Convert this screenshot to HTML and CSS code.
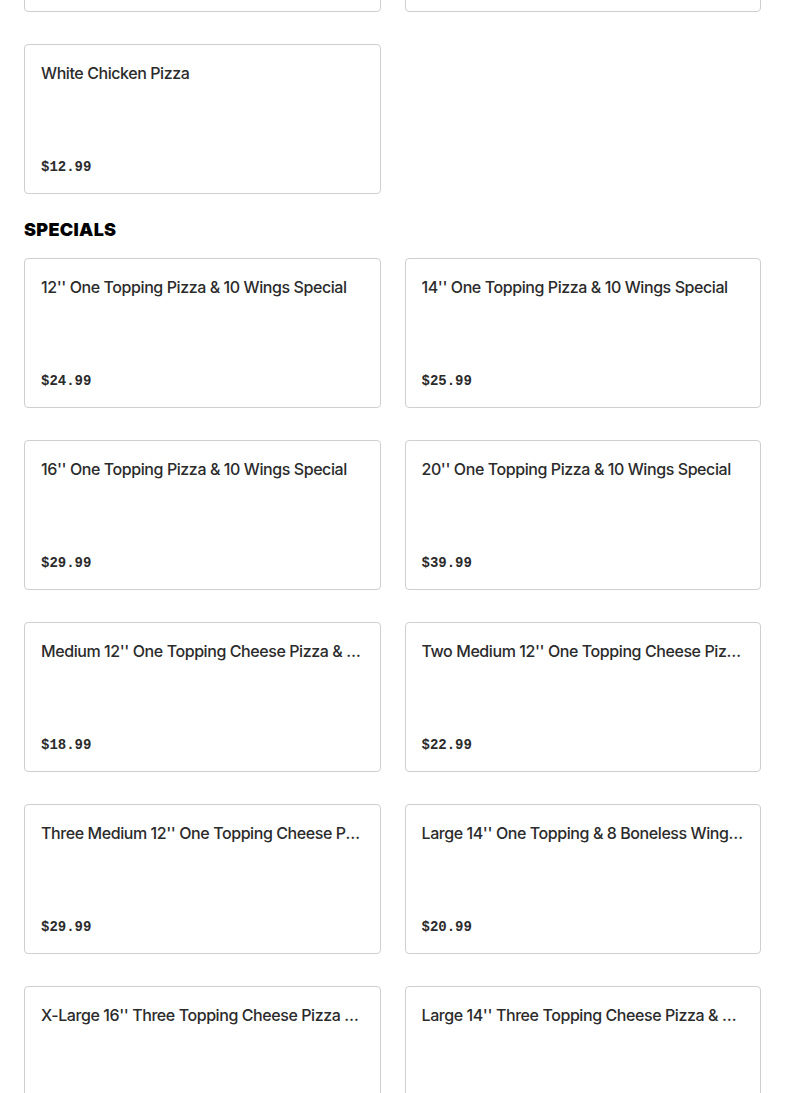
FILE: index.html
```html
<!DOCTYPE html>
<html lang="en">
<head>
<meta charset="utf-8">
<title>Menu</title>
<link rel="stylesheet" href="styles.css">
</head>
<body>
<main class="menu">
  <section class="category">
    <div class="grid">
      <div class="card"><div class="title">Veggie Pizza</div><div class="price">$12.99</div></div>
      <div class="card"><div class="title">Meat Lovers Pizza</div><div class="price">$14.99</div></div>
      <div class="card"><div class="title">White Chicken Pizza</div><div class="price">$12.99</div></div>
    </div>
  </section>
  <section class="category">
    <h2 class="heading">SPECIALS</h2>
    <div class="grid">
      <div class="card"><div class="title">12'' One Topping Pizza &amp; 10 Wings Special</div><div class="price">$24.99</div></div>
      <div class="card"><div class="title">14'' One Topping Pizza &amp; 10 Wings Special</div><div class="price">$25.99</div></div>
      <div class="card"><div class="title">16'' One Topping Pizza &amp; 10 Wings Special</div><div class="price">$29.99</div></div>
      <div class="card"><div class="title">20'' One Topping Pizza &amp; 10 Wings Special</div><div class="price">$39.99</div></div>
      <div class="card"><div class="title">Medium 12'' One Topping Cheese Pizza &amp; 10 Wings</div><div class="price">$18.99</div></div>
      <div class="card"><div class="title">Two Medium 12'' One Topping Cheese Pizzas</div><div class="price">$22.99</div></div>
      <div class="card"><div class="title">Three Medium 12'' One Topping Cheese Pizzas</div><div class="price">$29.99</div></div>
      <div class="card"><div class="title">Large 14'' One Topping &amp; 8 Boneless Wings Special</div><div class="price">$20.99</div></div>
      <div class="card"><div class="title">X-Large 16'' Three Topping Cheese Pizza &amp; 20 Wings</div><div class="price">$34.99</div></div>
      <div class="card"><div class="title">Large 14'' Three Topping Cheese Pizza &amp; 2 Liter</div><div class="price">$24.99</div></div>
    </div>
  </section>
</main>
</body>
</html>
```

FILE: styles.css
```css
* { box-sizing: border-box; }
html, body { margin: 0; padding: 0; background: #fff; }
body { font-family: Inter, "Liberation Sans", Arial, sans-serif; color: #2a2a2a; }

.menu {
  padding: 0 24px;
  margin-top: -138px;
}

.category + .category { padding-top: 24px; }

.heading {
  margin: 0 0 16px;
  font-family: Inter, "Liberation Sans", Arial, sans-serif;
  font-size: 18px;
  line-height: 24px;
  font-weight: 900;
  color: #000;
  letter-spacing: 0.3px;
}

.grid {
  display: grid;
  grid-template-columns: minmax(0, 1fr) minmax(0, 1fr);
  column-gap: 24px;
  row-gap: 32px;
}

.card {
  min-width: 0;
  height: 150px;
  border: 1px solid #cfcfcf;
  border-radius: 4px;
  padding: 16px;
  display: flex;
  flex-direction: column;
  justify-content: space-between;
  background: #fff;
}

.title {
  font-size: 16px;
  line-height: 24px;
  font-weight: 500;
  letter-spacing: -0.42px;
  color: #2b2b2b;
  white-space: nowrap;
  overflow: hidden;
  text-overflow: ellipsis;
}

.price {
  font-family: "Liberation Mono", "DejaVu Sans Mono", monospace;
  font-size: 14px;
  line-height: 20px;
  font-weight: 700;
  color: #2b2b2b;
}
```
